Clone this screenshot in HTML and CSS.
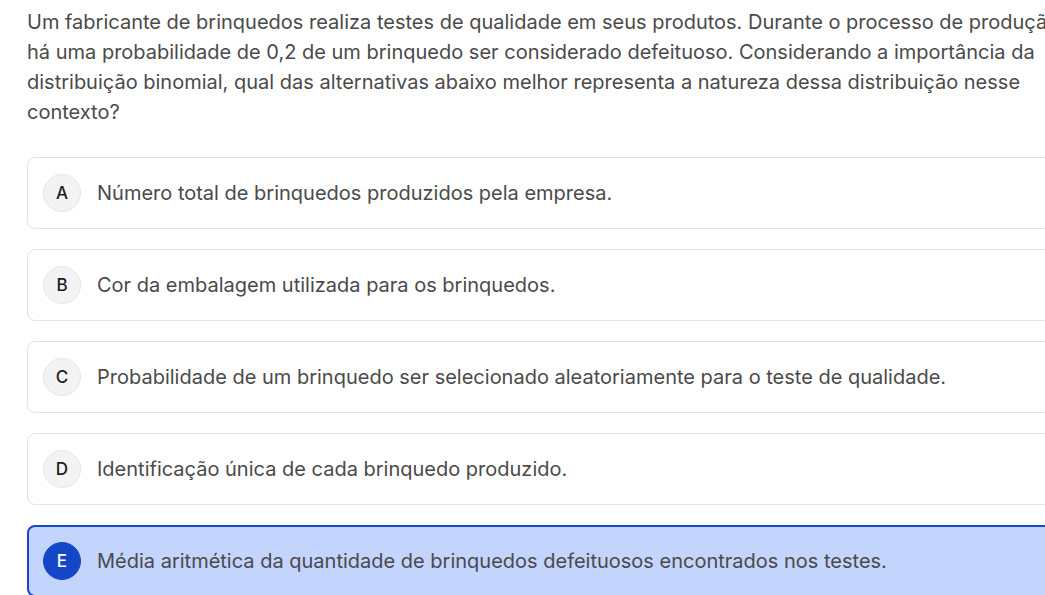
FILE: index.html
```html
<!DOCTYPE html>
<html lang="pt-BR">
<head>
<meta charset="utf-8">
<title>Questão</title>
<link rel="stylesheet" href="styles.css">
</head>
<body>
<main class="question">
  <p class="statement">Um fabricante de brinquedos realiza testes de qualidade em seus produtos. Durante o processo de produção, há uma probabilidade de 0,2 de um brinquedo ser considerado defeituoso. Considerando a importância da distribuição binomial, qual das alternativas abaixo melhor representa a natureza dessa distribuição nesse contexto?</p>
  <ul class="options">
    <li class="option"><span class="letter">A</span><span class="text">Número total de brinquedos produzidos pela empresa.</span></li>
    <li class="option"><span class="letter">B</span><span class="text">Cor da embalagem utilizada para os brinquedos.</span></li>
    <li class="option"><span class="letter">C</span><span class="text">Probabilidade de um brinquedo ser selecionado aleatoriamente para o teste de qualidade.</span></li>
    <li class="option"><span class="letter">D</span><span class="text">Identificação única de cada brinquedo produzido.</span></li>
    <li class="option selected"><span class="letter">E</span><span class="text">Média aritmética da quantidade de brinquedos defeituosos encontrados nos testes.</span></li>
  </ul>
</main>
</body>
</html>
```

FILE: styles.css
```css
html, body {
  margin: 0;
  padding: 0;
  overflow: hidden;
  background: #ffffff;
}

body {
  font-family: Inter, "Noto Sans", sans-serif;
  color: #4a4a4a;
}

.question {
  width: 1050px;
  padding: 7px 0 0 27px;
}

.statement {
  margin: 0;
  font-size: 20px;
  line-height: 30px;
}

.options {
  list-style: none;
  margin: 30px 0 0 0;
  padding: 0;
  display: flex;
  flex-direction: column;
  gap: 20px;
}

.option {
  display: flex;
  align-items: center;
  gap: 16px;
  height: 72px;
  box-sizing: border-box;
  padding: 0 15px;
  border: 1px solid #e3e3e3;
  border-radius: 8px;
  background: #ffffff;
}

.letter {
  flex: none;
  width: 38px;
  height: 38px;
  box-sizing: border-box;
  border-radius: 50%;
  border: 1px solid #e6e6e6;
  background: #f3f3f3;
  color: #1c1c1c;
  font-size: 17px;
  font-weight: 500;
  display: flex;
  align-items: center;
  justify-content: center;
}

.text {
  font-size: 20px;
  line-height: 26px;
}

.option.selected {
  border: 2px solid #1747c6;
  background: #c3d4fd;
  padding: 0 14px;
}

.option.selected .letter {
  background: #1447c8;
  border-color: #1447c8;
  color: #ffffff;
}
```
